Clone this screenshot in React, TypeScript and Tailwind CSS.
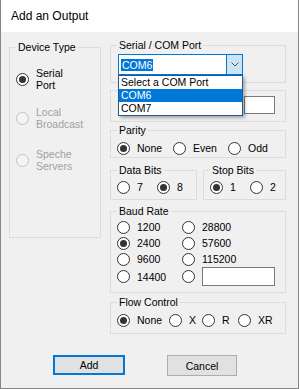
import React from "react";

function Radio({
  checked = false,
  disabled = false,
  label,
  className = "",
}: {
  checked?: boolean;
  disabled?: boolean;
  label: React.ReactNode;
  className?: string;
}) {
  return (
    <div className={`flex items-center gap-[7px] ${className}`}>
      <span
        className={`w-[13px] h-[13px] rounded-full border flex items-center justify-center shrink-0 ${
          disabled ? "border-[#c2c2c2] bg-[#f4f4f4]" : "border-[#333333] bg-white"
        }`}
      >
        {checked && <span className="w-[7px] h-[7px] rounded-full bg-[#333333]" />}
      </span>
      <span className={disabled ? "text-[#a0a0a0]" : ""}>{label}</span>
    </div>
  );
}

function Group({
  title,
  className = "",
  children,
}: {
  title: string;
  className?: string;
  children: React.ReactNode;
}) {
  return (
    <fieldset className={`border border-[#dcdcdc] px-[6px] min-w-0 ${className}`}>
      <legend className="px-[2px] leading-[13px]">{title}</legend>
      {children}
    </fieldset>
  );
}

export default function App() {
  return (
    <div className="w-[299px] h-[389px] bg-[#f0f0f0] border-x border-b border-[#868686] flex flex-col text-black text-[10.5px] leading-[12px] font-['Liberation_Sans',Arial,sans-serif]">
      <div className="h-[32px] bg-white flex items-center pl-[10px] text-[12px] shrink-0">
        Add an Output
      </div>

      <div className="flex items-start pl-[8px] gap-[9px]">
        {/* Device Type */}
        <Group title="Device Type" className="mt-[9px] w-[92px] h-[197px]">
          <div className="flex flex-col pt-[13px]">
            <Radio checked label={<span className="block">Serial<br />Port</span>} />
            <Radio disabled className="mt-[15px]" label={<span className="block">Local<br />Broadcast</span>} />
            <Radio disabled className="mt-[18px]" label={<span className="block">Speche<br />Servers</span>} />
          </div>
        </Group>

        {/* Right column */}
        <div className="w-[176px] flex flex-col">
          <Group title="Serial / COM Port" className="mt-[7px] pb-[7px]">
            <div className="relative mt-[2px] ml-[1px] w-[125px] h-[21px]">
              <div className="w-full h-full border border-[#0078d7] bg-white flex">
                <div className="flex-1 flex items-center pl-[2px]">
                  <span className="bg-[#0078d7] text-white leading-[12px] px-[1px]">COM6</span>
                </div>
                <div className="w-[16px] h-full border-l border-[#0078d7] bg-[#cce4f7] flex items-center justify-center">
                  <svg width="8" height="5" viewBox="0 0 8 5">
                    <polyline points="0.5,0.5 4,4 7.5,0.5" fill="none" stroke="#555" strokeWidth="1" />
                  </svg>
                </div>
              </div>
              <div className="absolute z-10 left-0 top-[21px] w-[125px] border border-[#1e5a9e] bg-white shadow-[2px_2px_3px_rgba(0,0,0,0.3)]">
                <div className="h-[13px] leading-[13px] pl-[2px]">Select a COM Port</div>
                <div className="h-[13px] leading-[13px] pl-[2px] bg-[#0078d7] text-white">COM6</div>
                <div className="h-[13px] leading-[13px] pl-[2px]">COM7</div>
              </div>
            </div>
          </Group>

          <div className="mt-[7px] h-[32px] border border-[#dcdcdc] flex justify-end items-start pt-[5px] pr-[10px]">
            <div className="w-[31px] h-[18px] border border-[#7a7a7a] bg-white" />
          </div>

          <Group title="Parity" className="mt-[2px] pt-[4px] pb-[2px]">
            <div className="flex h-[14px] items-center">
              <Radio checked label="None" className="w-[56px]" />
              <Radio label="Even" className="w-[55px]" />
              <Radio label="Odd" />
            </div>
          </Group>

          <div className="flex gap-[6px] mt-[6px]">
            <Group title="Data Bits" className="w-[87px] pt-[3px] pb-[5px]">
              <div className="flex h-[14px] items-center">
                <Radio label="7" className="w-[40px]" />
                <Radio checked label="8" />
              </div>
            </Group>
            <Group title="Stop Bits" className="w-[83px] pt-[3px] pb-[5px]">
              <div className="flex h-[14px] items-center">
                <Radio checked label="1" className="w-[40px]" />
                <Radio label="2" />
              </div>
            </Group>
          </div>

          <Group title="Baud Rate" className="mt-[5px] pt-[1px] pb-[6px]">
            <div className="grid grid-cols-[65px_1fr]">
              <Radio label="1200" className="h-[16px]" />
              <Radio label="28800" className="h-[16px]" />
              <Radio checked label="2400" className="h-[16px]" />
              <Radio label="57600" className="h-[16px]" />
              <Radio label="9600" className="h-[16px]" />
              <Radio label="115200" className="h-[16px]" />
              <Radio label="14400" className="h-[19px]" />
              <div className="flex items-center gap-[7px] h-[19px]">
                <span className="w-[13px] h-[13px] rounded-full border border-[#333333] bg-white shrink-0" />
                <div className="w-[73px] h-[19px] border border-[#7a7a7a] bg-white" />
              </div>
            </div>
          </Group>

          <Group title="Flow Control" className="mt-[3px] pt-[4px] pb-[6px]">
            <div className="flex h-[14px] items-center">
              <Radio checked label="None" className="w-[52px]" />
              <Radio label="X" className="w-[33px]" />
              <Radio label="R" className="w-[36px]" />
              <Radio label="XR" />
            </div>
          </Group>
        </div>
      </div>

      <div className="flex mt-[21px] pl-[52px] gap-[42px]">
        <button className="w-[72px] h-[20px] border-2 border-[#0078d7] bg-[#e1e1e1] flex items-center justify-center">
          Add
        </button>
        <button className="w-[70px] h-[21px] border border-[#adadad] bg-[#e1e1e1] flex items-center justify-center">
          Cancel
        </button>
      </div>
    </div>
  );
}
